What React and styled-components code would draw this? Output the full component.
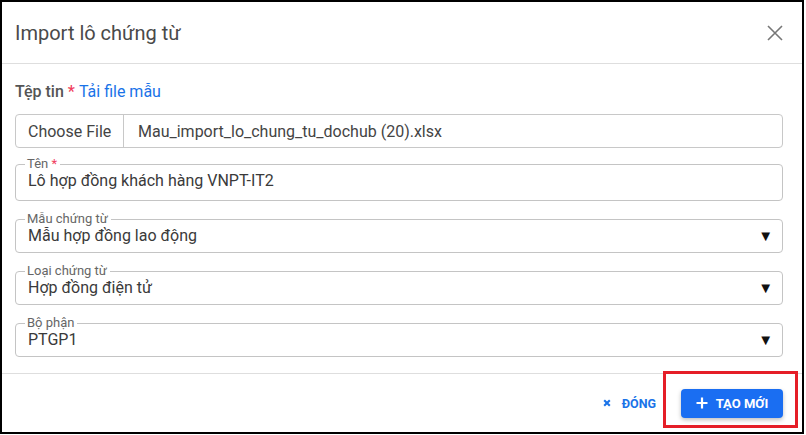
import styled, { createGlobalStyle } from "styled-components";

const GlobalStyle = createGlobalStyle`
  html, body {
    margin: 0;
    padding: 0;
    background: #fff;
  }
  body {
    font-family: Roboto, "Noto Sans", Arial, sans-serif;
  }
  * {
    box-sizing: border-box;
  }
`;

const Dialog = styled.div`
  position: relative;
  width: 804px;
  height: 434px;
  border: 2px solid #000;
  background: #fff;
  display: flex;
  flex-direction: column;
`;

const Header = styled.div`
  height: 62px;
  display: flex;
  align-items: center;
  justify-content: space-between;
  padding: 0 18px 0 13px;
  border-bottom: 1px solid #dedede;
`;

const Title = styled.h2`
  margin: 0;
  font-size: 20px;
  font-weight: 400;
  color: #4a4a4a;
`;

const CloseButton = styled.button`
  border: 0;
  background: none;
  padding: 0;
  width: 18px;
  height: 18px;
  display: flex;
  align-items: center;
  justify-content: center;
  cursor: pointer;
`;

const Body = styled.div`
  flex: 1;
  padding: 18px 19px 16px 13px;
  border-bottom: 1px solid #dedede;
`;

const Label = styled.div`
  font-size: 16px;
  line-height: 20px;
  font-weight: 500;
  color: #555;
  margin-bottom: 12px;
`;

const Required = styled.span`
  color: #f0405e;
`;

const Link = styled.a`
  color: #1a73e8;
  font-weight: 400;
  text-decoration: none;
`;

const FileBox = styled.div`
  display: flex;
  height: 34px;
  border: 1px solid #c8c8c8;
  border-radius: 4px;
  font-size: 16px;
  color: #444;
  margin-bottom: 10px;
`;

const FileButton = styled.div`
  width: 108px;
  display: flex;
  align-items: center;
  padding-left: 12px;
  border-right: 1px solid #c8c8c8;
`;

const FileName = styled.div`
  display: flex;
  align-items: center;
  padding-left: 14px;
`;

const Field = styled.fieldset`
  margin: 0 0 12px;
  padding: 0 9px ${(p) => (p.$tall ? "8px" : "5px")} 12px;
  border: 1px solid #c4c4c4;
  border-radius: 4px;
  min-width: 0;
  &:last-child {
    margin-bottom: 0;
  }
`;

const Legend = styled.legend`
  margin-left: -3px;
  padding: 0 3px 0 2px;
  font-size: 13px;
  line-height: 12px;
  color: #666;
`;

const Value = styled.div`
  display: flex;
  align-items: center;
  justify-content: space-between;
  font-size: 16px;
  line-height: 22px;
  color: #3a3a3a;
`;

const Arrow = styled.span`
  font-size: 15px;
  color: #111;
`;

const Footer = styled.div`
  height: 58px;
  display: flex;
  align-items: center;
  justify-content: flex-end;
  gap: 25px;
  padding-right: 19px;
`;

const TextButton = styled.button`
  border: 0;
  background: none;
  display: flex;
  align-items: center;
  gap: 11px;
  padding: 0;
  font-family: inherit;
  font-size: 12.5px;
  font-weight: 700;
  color: #1a73e8;
  text-transform: uppercase;
`;

const PrimaryButton = styled.button`
  width: 102px;
  height: 29px;
  border: 0;
  border-radius: 4px;
  background: #1a6ef2;
  color: #fff;
  display: flex;
  align-items: center;
  justify-content: center;
  gap: 8px;
  font-family: inherit;
  font-size: 13px;
  font-weight: 700;
  box-shadow: 0 2px 4px rgba(0, 0, 0, 0.25);
`;

const Highlight = styled.div`
  position: absolute;
  left: 661px;
  top: 369px;
  width: 135px;
  height: 57px;
  border: 3px solid #e51e28;
  pointer-events: none;
`;

const fields = [
  { label: "Tên", required: true, value: "Lô hợp đồng khách hàng VNPT-IT2" },
  { label: "Mẫu chứng từ", value: "Mẫu hợp đồng lao động", select: true },
  { label: "Loại chứng từ", value: "Hợp đồng điện tử", select: true },
  { label: "Bộ phận", value: "PTGP1", select: true },
];

const App = () => {
  return (
    <>
      <GlobalStyle />
      <Dialog>
        <Header>
          <Title>Import lô chứng từ</Title>
          <CloseButton aria-label="close">
            <svg width="16" height="16" viewBox="0 0 16 16">
              <path d="M1 1 L15 15 M15 1 L1 15" stroke="#777" strokeWidth="1.6" />
            </svg>
          </CloseButton>
        </Header>

        <Body>
          <Label>
            Tệp tin <Required>*</Required> <Link href="#">Tải file mẫu</Link>
          </Label>
          <FileBox>
            <FileButton>Choose File</FileButton>
            <FileName>Mau_import_lo_chung_tu_dochub (20).xlsx</FileName>
          </FileBox>

          {fields.map((f) => (
            <Field key={f.label} $tall={f.required}>
              <Legend>
                {f.label}
                {f.required && <Required> *</Required>}
              </Legend>
              <Value>
                <span>{f.value}</span>
                {f.select && <Arrow>▼</Arrow>}
              </Value>
            </Field>
          ))}
        </Body>

        <Footer>
          <TextButton>
            <svg width="8" height="8" viewBox="0 0 10 10">
              <path d="M1.5 1.5 L8.5 8.5 M8.5 1.5 L1.5 8.5" stroke="#1a73e8" strokeWidth="2.6" />
            </svg>
            Đóng
          </TextButton>
          <PrimaryButton>
            <svg width="12" height="12" viewBox="0 0 12 12">
              <path d="M6 0.5 V11.5 M0.5 6 H11.5" stroke="#fff" strokeWidth="2.2" />
            </svg>
            TẠO MỚI
          </PrimaryButton>
        </Footer>

        <Highlight />
      </Dialog>
    </>
  );
};

export default App;
